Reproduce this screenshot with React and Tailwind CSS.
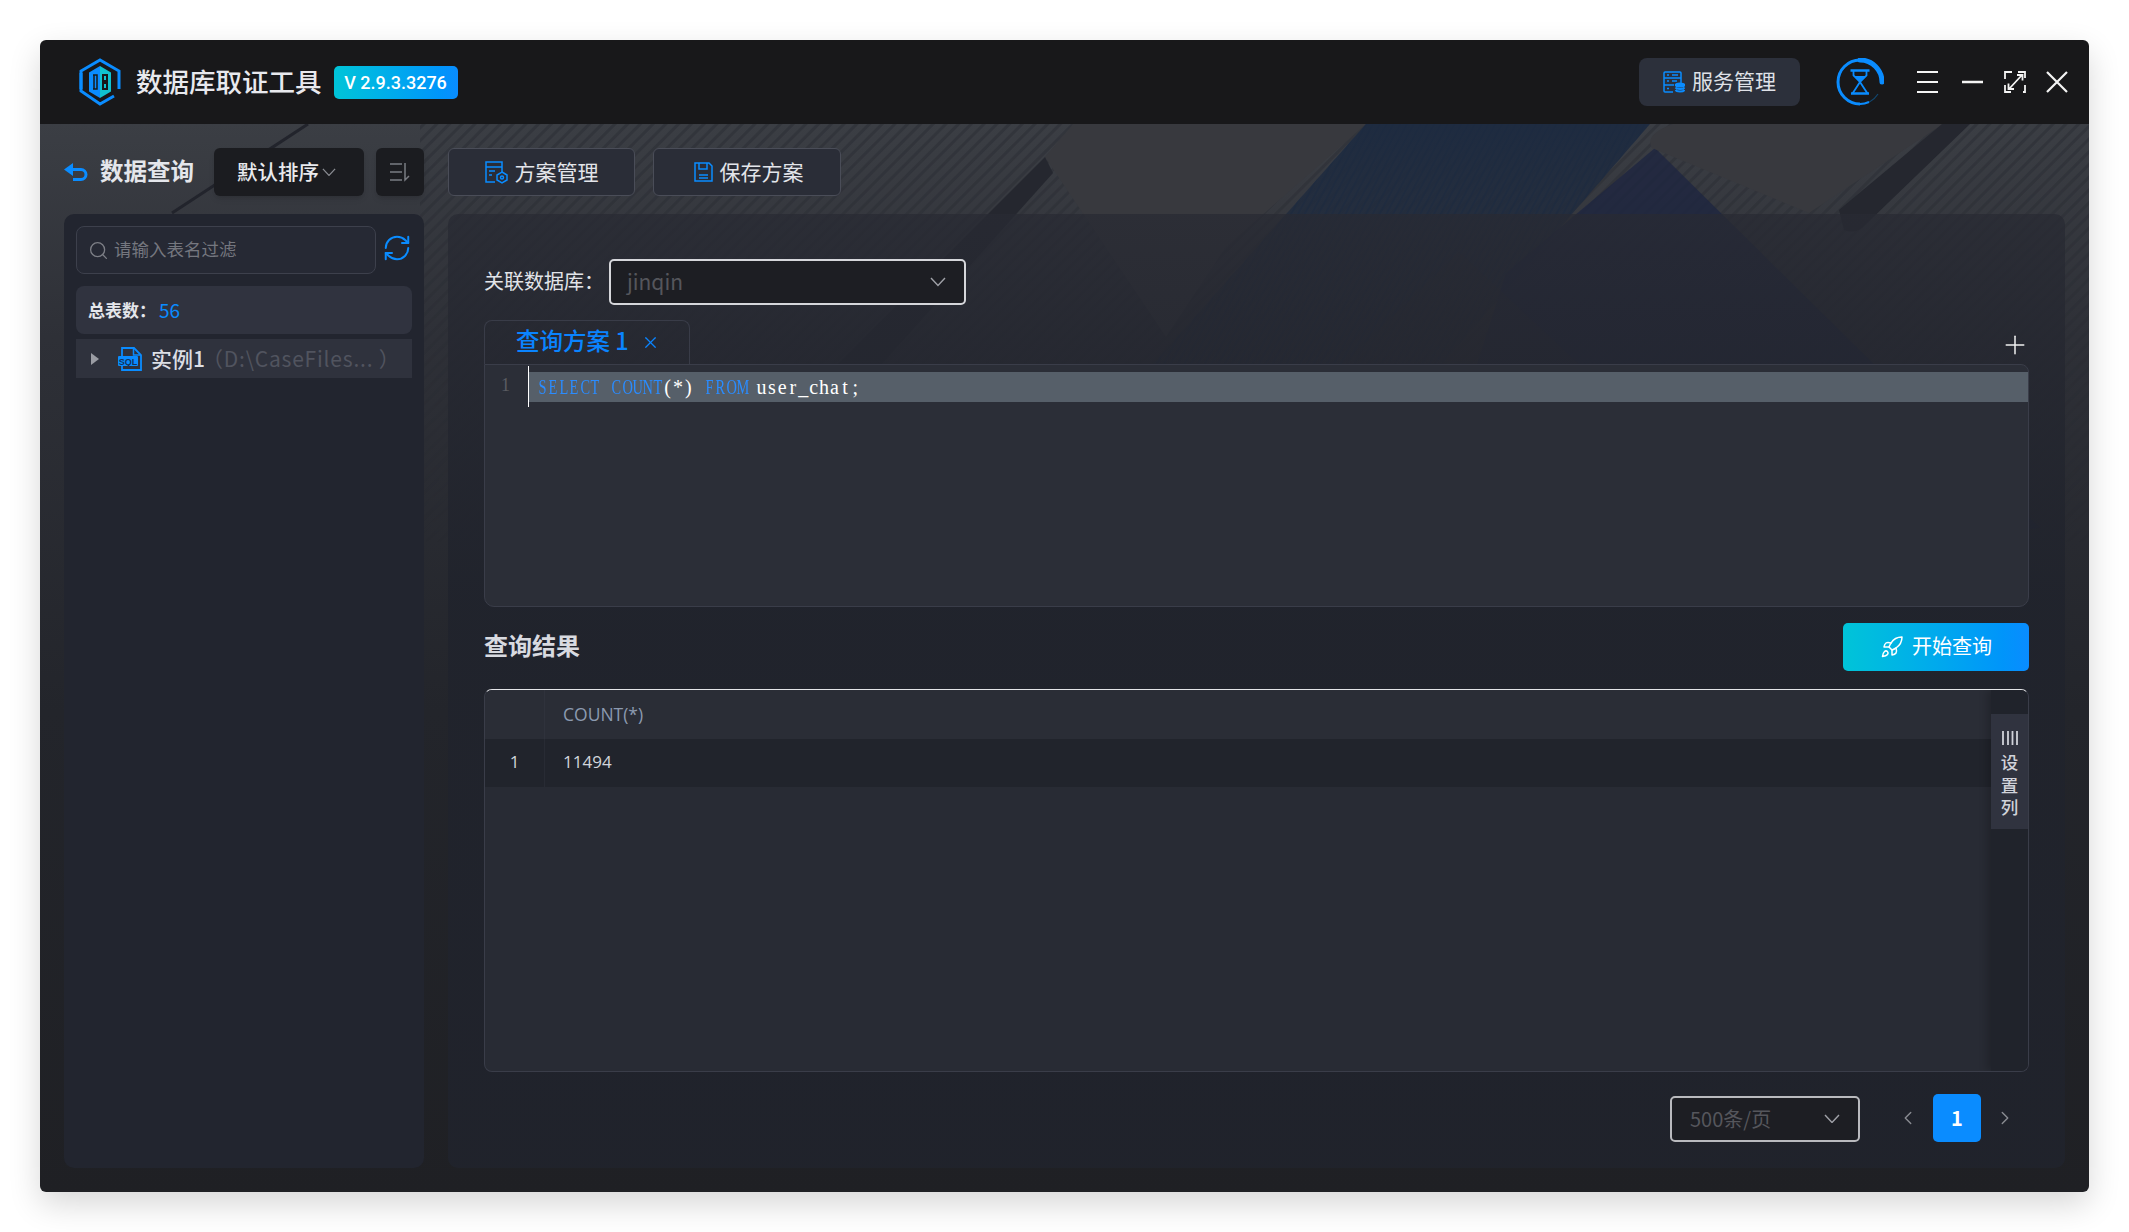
import React from 'react';
import { ChevronLeft, ChevronRight, Search, RefreshCw, Rocket, Plus, X } from 'lucide-react';

function Logo() {
  return (
    <svg width="42" height="48" viewBox="0 0 42 48" fill="none">
      <path d="M2 31V13L21 2l19 11v18" stroke="#0a8cff" strokeWidth="3" />
      <path d="M2 15v18l19 13 14-8" stroke="#0a8cff" strokeWidth="3" />
      <path d="M21 8 10 14.500v19L21 40z" fill="#0a8cff" />
      <path d="M21 8l11 6.500v19L21 40z" fill="#10c2cf" />
      <path d="M15 17h3v14h-3zM14 17h3M14 31h3" stroke="#18181a" strokeWidth="1.500" fill="none" />
      <path d="M24 17h4v6h-4zM24 25h4v6h-4z" stroke="#18181a" strokeWidth="2" fill="none" />
    </svg>
  );
}

function ServiceIcon() {
  return (
    <svg width="22" height="22" viewBox="0 0 22 22" fill="none" stroke="#0a8cff" strokeWidth="1.500">
      <path d="M10 21H2a1 1 0 0 1-1-1V2a1 1 0 0 1 1-1h15a1 1 0 0 1 1 1v10" />
      <path d="M1 7h17M1 14h10M4 4h2M9 4h6M4 10h2M9 10h5M4 17.500h2" />
      <ellipse cx="17" cy="14" rx="4.500" ry="1.800" fill="#0a8cff" />
      <path d="M12.500 16.500c1 2 8 2 9 0M12.500 19c1 2 8 2 9 0" strokeWidth="1.800" />
    </svg>
  );
}

function Hourglass() {
  return (
    <svg width="48" height="48" viewBox="0 0 48 48" fill="none">
      <path d="M24 46A22 22 0 0 0 42 36" stroke="#12476f" strokeWidth="1.200" />
      <path d="M24 2A22 22 0 0 0 24 46" stroke="#0a8cff" strokeWidth="3" />
      <path d="M24 2A22 22 0 0 1 46 24" stroke="#0a8cff" strokeWidth="5" strokeLinecap="round" />
      <path d="M24 46a22 22 0 0 0 9-2" stroke="#0a8cff" strokeWidth="2" />
      <path d="M14.500 12.500h19M15 35.500h18" stroke="#0a8cff" strokeWidth="2.500" />
      <path d="M17.500 12.500v5l6.500 6.500 6.500-6.500v-5M24 24l-7.500 11.500M24 24l7.500 11.500" stroke="#0a8cff" strokeWidth="1.800" />
      <path d="M18 18h12l-6 5.500z" fill="#0a8cff" />
    </svg>
  );
}

function WindowButtons() {
  return (
    <div className="flex items-center">
      <svg width="22" height="24" viewBox="0 0 22 24" stroke="#f4f4f4" strokeWidth="2.200">
        <path d="M0 2h21M0 12h21M0 22h21" />
      </svg>
      <svg className="ml-[23px]" width="22" height="4" viewBox="0 0 22 4" stroke="#f4f4f4" strokeWidth="2.400">
        <path d="M0 2h21" />
      </svg>
      <svg className="ml-[20px]" width="22" height="22" viewBox="0 0 22 22" fill="none" stroke="#f4f4f4" strokeWidth="1.800">
        <path d="M1 8V1h7M21 14v7h-2M1 14v7h6M14 1h7v6" />
        <path d="M5 18 18 4M13 4h5.500v5.500M4.500 12.500V18H10" />
      </svg>
      <svg className="ml-[20px]" width="22" height="22" viewBox="0 0 22 22" stroke="#f4f4f4" strokeWidth="2.200">
        <path d="M1 1l20 20M21 1 1 21" />
      </svg>
    </div>
  );
}

function BackIcon() {
  return (
    <svg width="24" height="18" viewBox="0 0 24 18" fill="none">
      <path d="M0 6.500 9 0v13z" fill="#0a8cff" />
      <path d="M8 6.500h9a5 5 0 0 1 0 10H9" stroke="#0a8cff" strokeWidth="3" />
    </svg>
  );
}

function SortIcon() {
  return (
    <svg width="20" height="19" viewBox="0 0 20 19" fill="none" stroke="#7a7c82" strokeWidth="1.500">
      <path d="M0 1h12M0 9h12M0 17h12M15 0v17l4-4" />
    </svg>
  );
}

function PlanIcon() {
  return (
    <svg width="23" height="23" viewBox="0 0 23 23" fill="none" stroke="#0a8cff" strokeWidth="1.500">
      <path d="M10 21H1V1h16v10" />
      <path d="M1 6h16M4 10h6M4 14h3" />
      <path d="M17 11l5 3v5l-5 3-5-3v-5z" />
      <circle cx="17" cy="16.500" r="1.500" />
    </svg>
  );
}

function SaveIcon() {
  return (
    <svg width="19" height="20" viewBox="0 0 19 20" fill="none" stroke="#0a8cff" strokeWidth="1.500">
      <path d="M1 1h14l3 3v15H1z" />
      <path d="M5 1v6h8V1M5 13h9M5 16h9" />
    </svg>
  );
}

function SqlFileIcon() {
  return (
    <svg width="25" height="24" viewBox="0 0 25 24">
      <path d="M4 9V1h12l7 7v15H4v-4" fill="none" stroke="#0a8cff" strokeWidth="1.800" />
      <path d="M15.500 1v7H23" fill="none" stroke="#0a8cff" strokeWidth="1.500" />
      <rect x="0" y="9" width="20" height="10" rx="1" fill="#0a8cff" />
      <text x="10" y="17.500" textAnchor="middle" fontSize="9" fontWeight="700" fontFamily="Liberation Sans, sans-serif" fill="#12325a">SQL</text>
    </svg>
  );
}

function Caret({ color = '#a0a2a8', width = 16 }) {
  return (
    <svg width={width} height={width * 0.6} viewBox="0 0 16 9.600" fill="none" stroke={color} strokeWidth="1.400">
      <path d="M1 1l7 7.500L15 1" />
    </svg>
  );
}

// window wallpaper behind the panels
function Wallpaper() {
  return (
    <svg className="absolute inset-0 w-full h-full" viewBox="0 0 2049 1068" preserveAspectRatio="none">
      <defs>
        <linearGradient id="base" x1="0" y1="0" x2="0" y2="1">
          <stop offset="0" stopColor="#3b3e44" />
          <stop offset="0.2" stopColor="#2e3037" />
          <stop offset="0.55" stopColor="#23252b" />
          <stop offset="1" stopColor="#1f2024" />
        </linearGradient>
        <pattern id="hatch" width="9" height="9" patternUnits="userSpaceOnUse" patternTransform="rotate(-45)">
          <rect width="9" height="3" fill="#26282f" opacity="0.4" />
        </pattern>
        <pattern id="hatchBlue" width="6" height="6" patternUnits="userSpaceOnUse" patternTransform="rotate(-62)">
          <rect width="6" height="2" fill="#1c2a3f" opacity="0.5" />
        </pattern>
        <linearGradient id="fadeBlue" x1="0" y1="0" x2="0" y2="1">
          <stop offset="0" stopColor="#1e2b40" />
          <stop offset="1" stopColor="#232a38" stopOpacity="0.3" />
        </linearGradient>
        <linearGradient id="fadeHatch" x1="0" y1="0" x2="0" y2="1">
          <stop offset="0" stopColor="#fff" />
          <stop offset="1" stopColor="#fff" stopOpacity="0" />
        </linearGradient>
        <mask id="hatchMask">
          <rect x="380" width="1669" height="420" fill="url(#fadeHatch)" />
        </mask>
      </defs>
      <rect width="2049" height="1068" fill="url(#base)" />
      <rect x="380" width="1669" height="420" fill="url(#hatch)" mask="url(#hatchMask)" />
      <path d="M268 0 132 89" stroke="#22242c" strokeWidth="3" />
      <path d="M1033 0h293L1186 123l-60 90-121-180z" fill="#38393e" />
      <path d="M1005 33l8 16-260 290-40-14z" fill="#25272f" />
      <path d="M1326 0h284L1350 300H1060z" fill="url(#fadeBlue)" />
      <path d="M1326 0h284L1350 300H1060z" fill="url(#hatchBlue)" />
      <path d="M1615 24l385 380-634 60 100-315z" fill="#1e2540" opacity="0.8" />
      <path d="M1633 0h270l-134 89-157-65q-8-14 21-24" fill="#38393e" />
      <path d="M1902 0h28l-108 104q-8 6-18 2l-5-20z" fill="#25272f" />
      <path d="M1419 128l330 308H1100z" fill="#2c2d31" opacity="0.4" />
    </svg>
  );
}

function Toolbar({ children }) {
  return <div className="h-12 mb-[18px] flex items-center shrink-0">{children}</div>;
}

function OutlineButton({ icon, label, width }) {
  return (
    <button className={`h-12 ${width} rounded-md border border-[#4a4d58] bg-[#2a2d37] flex items-center justify-center gap-[7px] text-[21px] text-[#e3e5ea]`}>
      {icon}
      {label}
    </button>
  );
}

// the editor's font is a narrow serif on a fixed grid
function CodeText({ text, color }) {
  return (
    <span className={color}>
      {text.split('').map((ch, i) => (
        <span
          key={i}
          className={`inline-block w-[10.450px] text-center ${/[A-Z]/.test(ch) ? 'scale-x-[0.72]' : ''}`}
        >
          {ch === ' ' ? '\u00a0' : ch}
        </span>
      ))}
    </span>
  );
}

export default function App() {
  return (
    <div className="w-[2129px] h-[1232px] bg-white p-10 font-['Noto_Sans_CJK_SC',sans-serif]">
      <div className="relative w-[2049px] h-[1152px] rounded-md flex flex-col overflow-hidden shadow-[0_12px_32px_rgba(0,0,0,0.16)]">
        {/* title bar */}
        <div className="relative z-10 h-[84px] shrink-0 bg-[#18181a] flex items-center pl-[39px] pr-[21px]">
          <Logo />
          <span className="ml-[15px] -translate-y-px text-[26.500px] font-medium text-[#e8e9ee] leading-none">数据库取证工具</span>
          <span className="ml-[12px] w-[124px] h-[33px] rounded-[5px] bg-gradient-to-r from-[#00c4d8] to-[#0a8cff] flex items-center justify-center text-white text-[18px] font-medium font-['Roboto',sans-serif]">V 2.9.3.3276</span>
          <div className="flex-1" />
          <button className="w-[161px] h-12 rounded-lg bg-[#2c303b] flex items-center justify-center gap-[7px] text-[21px] text-[#dfe1e7]">
            <ServiceIcon />
            <span className="-translate-y-px">服务管理</span>
          </button>
          <div className="ml-[36px] mr-[33px]">
            <Hourglass />
          </div>
          <WindowButtons />
        </div>

        {/* body */}
        <div className="relative flex-1 flex gap-6 p-6 min-h-0">
          <Wallpaper />

          {/* left column */}
          <div className="relative w-[360px] flex flex-col">
            <Toolbar>
              <BackIcon />
              <span className="ml-3 -translate-y-px text-[23.500px] font-bold text-[#e4e6eb] w-[114px] whitespace-nowrap">数据查询</span>
              <button className="w-[150px] h-12 pr-[5px] rounded-md bg-[#1b1c20] shadow-md flex items-center justify-center gap-[3px] text-[20.500px] font-medium text-[#e9eaee]">
                <span className="-translate-y-px">默认排序</span>
                <Caret color="#8a8c92" width={14} />
              </button>
              <button className="ml-3 w-12 h-12 rounded-md bg-[#1b1c20] shadow-md flex items-center justify-center">
                <SortIcon />
              </button>
            </Toolbar>
            <div className="flex-1 rounded-[10px] bg-[#22252f] px-3 pt-3">
              <div className="flex items-center">
                <div className="w-[300px] h-12 rounded-lg border border-[#3d404c] bg-[#262934] flex items-center pl-[11px] gap-[5px] text-[17.500px] text-[#75777f]">
                  <Search size={21} strokeWidth={1.5} color="#7d7f86" />
                  <span className="-translate-y-px">请输入表名过滤</span>
                </div>
                <RefreshCw className="ml-[6px] -mt-1" size={30} strokeWidth={1.6} color="#0a8cff" />
              </div>
              <div className="mt-3 h-12 rounded-lg bg-[#30333f] flex items-center pl-3 text-[17px] font-bold text-[#e4e6eb]">
                总表数：
                <span className="ml-[3px] font-normal text-[#0a8cff] text-[19px]">56</span>
              </div>
              <div className="mt-[5px] h-[39px] bg-[#2f323d] flex items-center pl-[15px] text-[21px] whitespace-nowrap">
                <svg width="8" height="12" viewBox="0 0 8 12"><path d="M0 0l8 6-8 6z" fill="#9a9ca3" /></svg>
                <span className="ml-[19px]"><SqlFileIcon /></span>
                <span className="ml-2 font-medium text-[#dcdee4]">实例1</span>
                <span className="-ml-[3px] text-[#51545f] tracking-[0.8px]">（D:\CaseFiles... ）</span>
              </div>
            </div>
          </div>

          {/* right column */}
          <div className="relative flex-1 flex flex-col min-w-0">
            <Toolbar>
              <OutlineButton icon={<PlanIcon />} label="方案管理" width="w-[187px]" />
              <div className="w-[18px]" />
              <OutlineButton icon={<SaveIcon />} label="保存方案" width="w-[188px] pl-[3px]" />
            </Toolbar>
            <div className="flex-1 rounded-[10px] bg-gradient-to-b from-[#282a33]/75 to-[#20232c]/90 to-40% pl-9 pr-9 pt-[45px] flex flex-col">
              <div className="flex items-center h-[46px]">
                <span className="w-[125px] -translate-y-px text-[20px] text-[#e2e4e9]">关联数据库：</span>
                <div className="w-[357px] h-[46px] rounded-[5px] border-2 border-[#d5d6da] bg-[#1d1e23] flex items-center justify-between pl-4 pr-[18px] text-[21px] text-[#55565c]">
                  jinqin
                  <Caret />
                </div>
              </div>

              <div className="mt-[15px] h-11 flex items-end justify-between">
                <div className="w-[206px] h-11 rounded-t-lg border border-b-0 border-[#393c48] flex items-center pl-[31px] text-[23.500px] font-medium text-[#0a84ff]">
                  <span className="-translate-y-[2px]">查询方案 1</span>
                  <X className="ml-[12px]" size={19} strokeWidth={1.5} color="#0a84ff" />
                </div>
                <Plus className="mb-[4px] -mr-px" size={30} strokeWidth={1.2} color="#f0f0f0" />
              </div>

              <div className="relative h-[243px] bg-[#2b2e37] border border-[#3a3d49] rounded-b-[10px] rounded-tr-lg">
                <span className="absolute left-[16px] top-[7px] font-['Liberation_Serif',serif] text-[18px] text-[#5a5c62]">1</span>
                <div className="absolute left-[43px] top-[1px] h-[41px] w-px bg-white" />
                <div className="ml-[44px] mt-[7px] h-[30px] bg-[#565f69] flex items-center pl-2 font-['Liberation_Serif',serif] text-[20px] leading-none whitespace-pre">
                  <CodeText text="SELECT COUNT" color="text-[#2a8cff]" />
                  <CodeText text="(*) " color="text-white" />
                  <CodeText text="FROM" color="text-[#2a8cff]" />
                  <CodeText text=" user_chat;" color="text-white" />
                </div>
              </div>

              <div className="mt-4 h-12 flex items-center justify-between">
                <span className="-translate-y-[2px] text-[24px] font-bold text-[#d8dae0]">查询结果</span>
                <button className="w-[186px] h-12 rounded-[5px] bg-gradient-to-r from-[#00c4d8] to-[#0a8cff] flex items-center justify-center gap-2 text-[20px] text-white">
                  <Rocket size={24} strokeWidth={1.5} />
                  <span className="-translate-y-px">开始查询</span>
                </button>
              </div>

              <div className="mt-[18px] h-[383px] rounded-lg border border-[#3a3d49] border-t-[#e4e5e8] bg-[#282b34] flex overflow-hidden font-['Open_Sans',sans-serif]">
                <div className="flex-1 flex flex-col">
                  <div className="h-[49px] flex items-center bg-[#2a2d36] text-[17.500px] text-[#8c9ab0]">
                    <div className="w-[60px] h-full border-r border-[#2f323c]" />
                    <span className="pl-[18px]">COUNT(*)</span>
                  </div>
                  <div className="h-12 flex items-center bg-[#21242c] text-[17px] text-[#d2d5db]">
                    <div className="w-[60px] h-full flex items-center justify-center border-r border-[#282b34]">
                      <span className="-translate-y-px">1</span>
                    </div>
                    <span className="pl-[18px] -translate-y-px">11494</span>
                  </div>
                </div>
                <div className="w-[37px] bg-[#20232b] pt-[24px] shadow-[-4px_0_8px_rgba(0,0,0,0.2)] z-10">
                  <div className="h-[115px] bg-[#30333f] flex flex-col items-center pt-[17px] text-[17.500px] font-medium leading-[22.500px] text-[#d0d2d9] font-['Noto_Sans_CJK_SC',sans-serif]">
                    <svg className="mb-[6px]" width="16" height="14" viewBox="0 0 16 14" stroke="#d0d2d9" strokeWidth="1.800">
                      <path d="M1 0v14M6 0v14M10.500 0v14M15 0v14" />
                    </svg>
                    <span>设</span>
                    <span>置</span>
                    <span>列</span>
                  </div>
                </div>
              </div>

              <div className="mt-[22px] h-12 flex items-center justify-end">
                <div className="mt-px w-[190px] h-[46px] rounded-[5px] border-2 border-[#b9babe] bg-[#1d1e23] flex items-center justify-between pl-[18px] pr-[18px] text-[20px] text-[#55565c]">
                  500条/页
                  <Caret />
                </div>
                <ChevronLeft className="ml-[37px]" size={22} strokeWidth={1.5} color="#8a8c92" />
                <div className="ml-[14px] w-12 h-12 rounded-[5px] bg-[#0a8cff] flex items-center justify-center text-white text-[20px] font-bold">1</div>
                <ChevronRight className="ml-[13px] mr-[13px]" size={22} strokeWidth={1.5} color="#8a8c92" />
              </div>
            </div>
          </div>
        </div>
      </div>
    </div>
  );
}
